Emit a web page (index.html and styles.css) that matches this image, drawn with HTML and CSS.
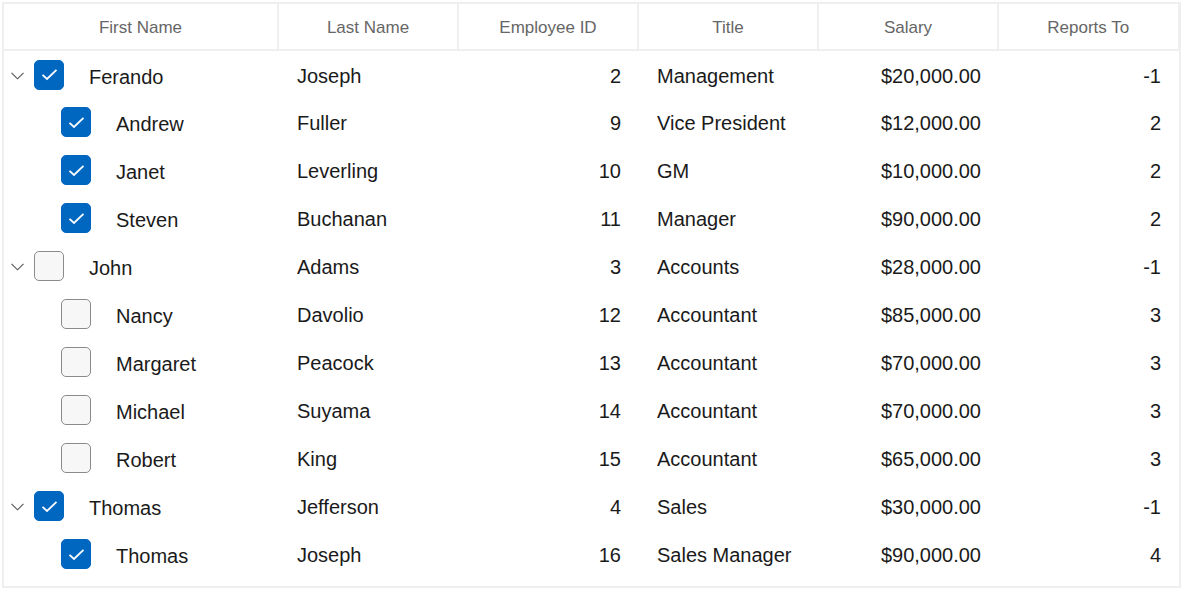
FILE: index.html
```html
<!DOCTYPE html>
<html lang="en">
<head>
    <meta charset="UTF-8">
    <meta name="viewport" content="width=device-width, initial-scale=1.0">
    <title>Employees</title>
    <link rel="stylesheet" href="styles.css">
</head>
<body>
    <!-- Tree grid of employees -->
    <div class="tree-grid">
        <table>
            <colgroup>
                <col class="col-first">
                <col class="col-std">
                <col class="col-std">
                <col class="col-std">
                <col class="col-std">
                <col class="col-std">
            </colgroup>
            <thead>
                <tr>
                    <th>First Name</th>
                    <th>Last Name</th>
                    <th>Employee ID</th>
                    <th>Title</th>
                    <th>Salary</th>
                    <th>Reports To</th>
                </tr>
            </thead>
            <tbody>
                <tr>
                    <td><div class="node"><span class="expander"><svg width="13" height="8" viewBox="0 0 13 8"><path d="M0.5 0.8 L6.5 6.8 L12.5 0.8" fill="none" stroke="#555" stroke-width="1.1"/></svg></span><span class="check checked"><svg width="17" height="13" viewBox="0 0 17 13"><path d="M1.5 6.8 L6 11 L15.5 1.8" fill="none" stroke="#fff" stroke-width="1.8"/></svg></span><span class="name">Ferando</span></div></td>
                    <td>Joseph</td><td class="num">2</td><td>Management</td><td class="num">$20,000.00</td><td class="num">-1</td>
                </tr>
                <tr>
                    <td><div class="node child"><span class="check checked"><svg width="17" height="13" viewBox="0 0 17 13"><path d="M1.5 6.8 L6 11 L15.5 1.8" fill="none" stroke="#fff" stroke-width="1.8"/></svg></span><span class="name">Andrew</span></div></td>
                    <td>Fuller</td><td class="num">9</td><td>Vice President</td><td class="num">$12,000.00</td><td class="num">2</td>
                </tr>
                <tr>
                    <td><div class="node child"><span class="check checked"><svg width="17" height="13" viewBox="0 0 17 13"><path d="M1.5 6.8 L6 11 L15.5 1.8" fill="none" stroke="#fff" stroke-width="1.8"/></svg></span><span class="name">Janet</span></div></td>
                    <td>Leverling</td><td class="num">10</td><td>GM</td><td class="num">$10,000.00</td><td class="num">2</td>
                </tr>
                <tr>
                    <td><div class="node child"><span class="check checked"><svg width="17" height="13" viewBox="0 0 17 13"><path d="M1.5 6.8 L6 11 L15.5 1.8" fill="none" stroke="#fff" stroke-width="1.8"/></svg></span><span class="name">Steven</span></div></td>
                    <td>Buchanan</td><td class="num">11</td><td>Manager</td><td class="num">$90,000.00</td><td class="num">2</td>
                </tr>
                <tr>
                    <td><div class="node"><span class="expander"><svg width="13" height="8" viewBox="0 0 13 8"><path d="M0.5 0.8 L6.5 6.8 L12.5 0.8" fill="none" stroke="#555" stroke-width="1.1"/></svg></span><span class="check"></span><span class="name">John</span></div></td>
                    <td>Adams</td><td class="num">3</td><td>Accounts</td><td class="num">$28,000.00</td><td class="num">-1</td>
                </tr>
                <tr>
                    <td><div class="node child"><span class="check"></span><span class="name">Nancy</span></div></td>
                    <td>Davolio</td><td class="num">12</td><td>Accountant</td><td class="num">$85,000.00</td><td class="num">3</td>
                </tr>
                <tr>
                    <td><div class="node child"><span class="check"></span><span class="name">Margaret</span></div></td>
                    <td>Peacock</td><td class="num">13</td><td>Accountant</td><td class="num">$70,000.00</td><td class="num">3</td>
                </tr>
                <tr>
                    <td><div class="node child"><span class="check"></span><span class="name">Michael</span></div></td>
                    <td>Suyama</td><td class="num">14</td><td>Accountant</td><td class="num">$70,000.00</td><td class="num">3</td>
                </tr>
                <tr>
                    <td><div class="node child"><span class="check"></span><span class="name">Robert</span></div></td>
                    <td>King</td><td class="num">15</td><td>Accountant</td><td class="num">$65,000.00</td><td class="num">3</td>
                </tr>
                <tr>
                    <td><div class="node"><span class="expander"><svg width="13" height="8" viewBox="0 0 13 8"><path d="M0.5 0.8 L6.5 6.8 L12.5 0.8" fill="none" stroke="#555" stroke-width="1.1"/></svg></span><span class="check checked"><svg width="17" height="13" viewBox="0 0 17 13"><path d="M1.5 6.8 L6 11 L15.5 1.8" fill="none" stroke="#fff" stroke-width="1.8"/></svg></span><span class="name">Thomas</span></div></td>
                    <td>Jefferson</td><td class="num">4</td><td>Sales</td><td class="num">$30,000.00</td><td class="num">-1</td>
                </tr>
                <tr>
                    <td><div class="node child"><span class="check checked"><svg width="17" height="13" viewBox="0 0 17 13"><path d="M1.5 6.8 L6 11 L15.5 1.8" fill="none" stroke="#fff" stroke-width="1.8"/></svg></span><span class="name">Thomas</span></div></td>
                    <td>Joseph</td><td class="num">16</td><td>Sales Manager</td><td class="num">$90,000.00</td><td class="num">4</td>
                </tr>
            </tbody>
        </table>
    </div>
</body>
</html>
```

FILE: styles.css
```css
body, html {
    margin: 0;
    background: #fff;
    font-family: "Segoe UI", "Liberation Sans", Arial, sans-serif;
}

.tree-grid {
    margin: 2px;
    width: 1175px;
    height: 582px;
    border: 2px solid #efefef;
}

table {
    border-collapse: collapse;
    table-layout: fixed;
    width: 1174px;
}

.col-first {
    width: 274px;
}

.col-std {
    width: 180px;
}

/* Header */
th {
    height: 43px;
    padding: 2px 0 0;
    font-size: 17px;
    font-weight: normal;
    color: #666;
    text-align: center;
    border-right: 2px solid #efefef;
    border-bottom: 2px solid #efefef;
}

th:last-child {
    border-right: 1px solid #efefef;
}

/* Rows */
td {
    height: 48px;
    padding: 3px 18px 0 19px;
    box-sizing: border-box;
    font-size: 20px;
    color: #1a1a1a;
    white-space: nowrap;
}

td.num {
    text-align: right;
    padding-right: 17px;
}

td:first-child {
    padding-left: 0;
    padding-top: 0;
}

.node {
    display: flex;
    align-items: center;
    padding-left: 7px;
}

.node.child {
    padding-left: 57px;
}

.expander {
    width: 13px;
    height: 8px;
    margin-top: 2px;
    margin-right: 10px;
    display: flex;
}

.check {
    width: 28px;
    height: 28px;
    border: 1px solid #8b8b8b;
    border-radius: 5px;
    background: #f7f7f7;
    display: flex;
    align-items: center;
    justify-content: center;
    flex-shrink: 0;
}

.check.checked {
    background: #0067c0;
    border-color: #0067c0;
}

.name {
    margin-left: 25px;
    padding-top: 5px;
}
```
